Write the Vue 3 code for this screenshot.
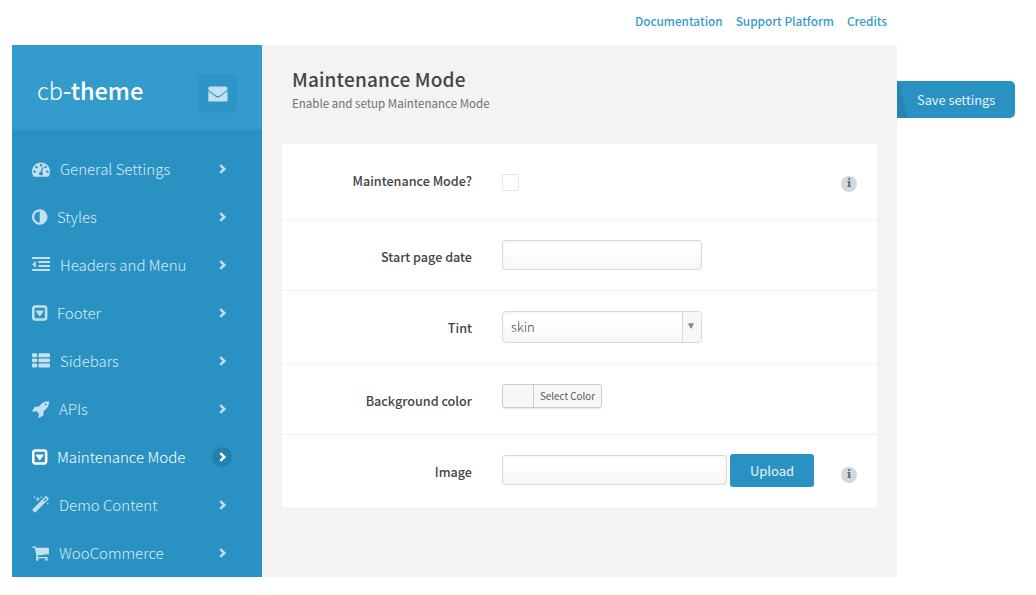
<script setup>
import { ref } from 'vue'

const links = ['Documentation', 'Support Platform', 'Credits']

const bar = (x, y, w, h = 256) => `M${x + 32} ${y}h${w - 64}q32 0 32 32v${h - 64}q0 32-32 32h-${w - 64}q-32 0-32-32v-${h - 64}q0-32 32-32z`
const block = (x, y, w) => `M${x + 96} ${y}h${w - 192}q96 0 96 96v192q0 96-96 96h-${w - 192}q-96 0-96-96v-192q0-96 96-96z`

const icons = {
  gauge: { x: 0, w: 1792, d: 'M384 1152q0-53-37.5-90.5t-90.5-37.5-90.5 37.5-37.5 90.5 37.5 90.5 90.5 37.5 90.5-37.5 37.5-90.5zm192-448q0-53-37.5-90.5t-90.5-37.5-90.5 37.5-37.5 90.5 37.5 90.5 90.5 37.5 90.5-37.5 37.5-90.5zm428 481l101-382q6-26-7.5-48.5t-38.5-29.5-48 6.5-30 39.5l-101 382q-60 5-107 43.5t-63 98.5q-20 77 20 146t117 89 146-20 89-117q16-60-6-117t-72-91zm660-33q0-53-37.5-90.5t-90.5-37.5-90.5 37.5-37.5 90.5 37.5 90.5 90.5 37.5 90.5-37.5 37.5-90.5zm-640-640q0-53-37.5-90.5t-90.5-37.5-90.5 37.5-37.5 90.5 37.5 90.5 90.5 37.5 90.5-37.5 37.5-90.5zm448 192q0-53-37.5-90.5t-90.5-37.5-90.5 37.5-37.5 90.5 37.5 90.5 90.5 37.5 90.5-37.5 37.5-90.5zm320 448q0 261-141 483-19 29-54 29h-1402q-35 0-54-29-141-221-141-483 0-182 71-348t191-286 286-191 348-71 348 71 286 191 191 286 71 348z' },
  contrast: { x: 128, w: 1536, d: 'M896 1440v-1088q-148 0-273 73t-198 198-73 273 73 273 198 198 273 73zm768-544q0 209-103 385.5t-279.5 279.5-385.5 103-385.5-103-279.5-279.5-103-385.5 103-385.5 279.5-279.5 385.5-103 385.5 103 279.5 279.5 103 385.5z' },
  outdent: { x: 0, w: 1792, d: 'M384 544v576q0 13-9.5 22.5t-22.5 9.5q-14 0-23-9l-288-288q-9-9-9-23t9-23l288-288q9-9 23-9 13 0 22.5 9.5t9.5 22.5z' + bar(0, 100, 1792, 200) + bar(640, 500, 1152, 200) + bar(640, 900, 1152, 200) + bar(0, 1300, 1792, 200) },
  caretBox: { x: 128, w: 1536, d: 'M1273 675q17 35-6 67l-320 448q-19 26-51 26t-52-26l-320-448q-23-32-6-67 18-35 58-35h640q40 0 57 35zM1408 1376v-960q0-32-32-32h-960q-32 0-32 32v960q0 32 32 32h960q32 0 32-32zM1664 416v960q0 119-84.5 203.5t-203.5 84.5h-960q-119 0-203.5-84.5t-84.5-203.5v-960q0-119 84.5-203.5t203.5-84.5h960q119 0 203.5 84.5t84.5 203.5z' },
  list: { x: 0, w: 1792, d: block(0, 128, 512) + block(0, 640, 512) + block(0, 1152, 512) + block(640, 128, 1152) + block(640, 640, 1152) + block(640, 1152, 1152) },
  rocket: { x: 0, w: 1664, d: 'M1440 448q0-40-28-68t-68-28-68 28-28 68 28 68 68 28 68-28 28-68zm224-288q0 249-75.5 430.5t-253.5 360.5q-81 80-195 176l-20 379q-2 16-16 26l-384 224q-7 4-16 4-12 0-23-9l-64-64q-13-14-8-32l85-276-281-281-276 85q-3 1-9 1-14 0-23-9l-64-64q-17-19-5-39l224-384q10-14 26-16l379-20q96-114 176-195 188-187 358-258t431-71q14 0 24 9.5t10 22.5z' },
  wand: { x: 64, w: 1664, d: 'M1254 581l293-293-107-107-293 293zm447-293q0 27-18 45l-1286 1286q-18 18-45 18t-45-18l-198-198q-18-18-18-45t18-45l1286-1286q18-18 45-18t45 18l198 198q18 18 18 45zm-1351-190l98 30-98 30-30 98-30-98-98-30 98-30 30-98zm350 162l196 60-196 60-60 196-60-196-196-60 196-60 60-196zm930 478l98 30-98 30-30 98-30-98-98-30 98-30 30-98zm-640-640l98 30-98 30-30 98-30-98-98-30 98-30 30-98z' },
  cart: { x: 64, w: 1664, d: 'M704 1536q0 52-38 90t-90 38-90-38-38-90 38-90 90-38 90 38 38 90zm896 0q0 52-38 90t-90 38-90-38-38-90 38-90 90-38 90 38 38 90zm128-1088v512q0 24-16.5 42.5t-40.5 21.5l-1044 122q13 60 13 70 0 16-24 64h920q26 0 45 19t19 45-19 45-45 19h-1024q-26 0-45-19t-19-45q0-11 8-31.5t16-36 21.5-40 15.5-29.5l-177-823h-204q-26 0-45-19t-19-45 19-45 45-19h256q16 0 28.5 6.5t19.5 15.5 13 24.5 8 26 5.5 29.5 4.5 26h1201q26 0 45 19t19 45z' },
}

const menu = [
  { label: 'General Settings', icon: icons.gauge },
  { label: 'Styles', icon: icons.contrast },
  { label: 'Headers and Menu', icon: icons.outdent },
  { label: 'Footer', icon: icons.caretBox },
  { label: 'Sidebars', icon: icons.list },
  { label: 'APIs', icon: icons.rocket },
  { label: 'Maintenance Mode', icon: icons.caretBox },
  { label: 'Demo Content', icon: icons.wand },
  { label: 'WooCommerce', icon: icons.cart },
]
const active = ref('Maintenance Mode')
const enabled = ref(false)
const startDate = ref('')
const image = ref('')
</script>

<template>
  <div class="page">
    <nav class="top-links">
      <a v-for="l in links" :key="l">{{ l }}</a>
    </nav>
    <div class="shell">
      <aside class="sidebar">
        <header class="brand">
          <div class="logo"><span>cb</span><b>-theme</b></div>
          <button class="mail" aria-label="Messages">
            <svg width="20" height="16" viewBox="0 0 20 16">
              <path fill="#c2e0f0" d="M2 0.500h15.500q2 0 2 2v1.200l-7.400 5.700q-2.200 1.600-4.400 0L0.300 3.700V2.500q0-2 1.700-2zM0.300 5l7.100 5.600q2.500 1.700 5 0L19.500 5v10.500H0.300z" />
            </svg>
          </button>
        </header>
        <ul class="menu">
          <li v-for="m in menu" :key="m.label" :class="{ active: m.label === active }" @click="active = m.label">
            <svg class="icon" :width="Math.round(m.icon.w * 18 / 1792)" height="18" :viewBox="`${m.icon.x} 0 ${m.icon.w} 1792`" preserveAspectRatio="xMinYMid slice">
              <path fill="currentColor" fill-rule="evenodd" :d="m.icon.d" />
            </svg>
            <span class="label">{{ m.label }}</span>
            <span class="arrow">
              <svg width="8" height="10" viewBox="0 0 8 10"><path d="M1.300 1.200L5.400 5L1.300 8.800" fill="none" stroke="currentColor" stroke-width="2.400" /></svg>
            </span>
          </li>
        </ul>
      </aside>
      <main class="content">
        <h1>Maintenance Mode</h1>
        <p class="desc">Enable and setup Maintenance Mode</p>
        <section class="card">
          <div class="row r1">
            <label>Maintenance Mode?</label>
            <button class="check" role="checkbox" :aria-checked="enabled" @click="enabled = !enabled"></button>
            <span class="info">i</span>
          </div>
          <div class="row r2">
            <label>Start page date</label>
            <input v-model="startDate" class="field date">
          </div>
          <div class="row r3">
            <label>Tint</label>
            <div class="select">
              <span>skin</span>
              <i><svg width="6" height="6" viewBox="0 0 6 6"><path d="M0 0.300h6L3.500 5.500h-1z" fill="#888" /></svg></i>
            </div>
          </div>
          <div class="row r4">
            <label>Background color</label>
            <button class="picker"><span>Select Color</span></button>
          </div>
          <div class="row r5">
            <label>Image</label>
            <input v-model="image" class="field image">
            <button class="upload">Upload</button>
            <span class="info">i</span>
          </div>
        </section>
      </main>
      <button class="save">
        <svg width="11" height="37" viewBox="0 0 11 37"><path d="M0 0h1.500L10.500 37H0z" fill="#2585b1" /></svg>
        <span>Save settings</span>
      </button>
    </div>
  </div>
</template>

<style>
body { background: #fff; }
</style>

<style scoped>
.page {
  width: 1036px;
  height: 595px;
  overflow: hidden;
  font-family: "Noto Sans CJK SC", "Noto Sans", sans-serif;
  color: #444;
}
.page * { box-sizing: border-box; }
button, input { font-family: inherit; padding: 0; border: 0; margin: 0; }
.top-links {
  height: 45px;
  width: 887px;
  display: flex;
  justify-content: flex-end;
  gap: 13px;
  line-height: 42px;
  font-size: 11.8px;
  font-weight: 500;
  color: #349ccc;
}
.shell { display: flex; align-items: flex-start; margin-left: 12px; height: 532px; }
.sidebar { width: 250px; height: 532px; background: #2a92c2; overflow: hidden; flex: none; }
.brand {
  height: 85px;
  background: #349ccc;
  display: flex;
  justify-content: space-between;
  padding: 29px 25px 0;
}
.logo { font-size: 23.5px; line-height: 32px; color: #fff; font-weight: 300; }
.logo b { font-weight: 500; }
.mail {
  width: 39px;
  height: 39px;
  border-radius: 5px;
  background: #2d96c6;
  display: flex;
  align-items: center;
  justify-content: center;
}
.menu { list-style: none; margin: 0; padding: 15px 30px 0 20px; }
.menu li { height: 48px; display: flex; align-items: center; color: #c2e0f0; }
.icon { flex: none; margin-right: 10px; overflow: visible; }
.label { flex: 1; font-size: 15px; font-weight: 300; line-height: 24px; color: #d8ebf5; white-space: nowrap; }
.arrow { width: 20px; height: 20px; border-radius: 50%; display: grid; place-items: center; margin-top: -1px; padding-left: 2px; }
.active .arrow { background: #2280ad; }
.menu .active, .active .label { color: #fff; }
.content { width: 635px; height: 532px; background: #f3f3f3; padding: 20px 20px 0; flex: none; }
h1 { margin: 0 0 0 10px; font-size: 19px; line-height: 28px; font-weight: 500; letter-spacing: .15px; color: #444; }
.desc { margin: 0 0 0 10px; font-size: 11.55px; line-height: 20px; height: 51px; color: #707070; }
.card { background: #fff; }
.row { display: flex; align-items: flex-start; border-bottom: 1px solid #f2f2f2; }
.row label {
  width: 190px;
  margin-right: 30px;
  text-align: right;
  font-size: 12.6px;
  line-height: 20px;
  font-weight: 500;
  white-space: nowrap;
}
.r1 { height: 76px; padding-top: 27px; }
.r2 { height: 71px; padding-top: 20px; }
.r3 { height: 73px; padding-top: 20px; }
.r4 { height: 71px; padding-top: 20px; }
.r5 { height: 72px; padding-top: 19px; border-bottom: 0; }
.r2 label, .r3 label, .r4 label { margin-top: 7px; }
.r5 label { margin-top: 8px; }
.check { width: 17px; height: 17px; margin-top: 3px; border: 1px solid #e3e6e8; border-radius: 2px; background: #fff; }
.field {
  height: 30px;
  border: 1px solid #dadada;
  border-radius: 3px;
  background: linear-gradient(#fff 30%, #f7f7f7);
  box-shadow: inset 0 1px 3px rgba(0, 0, 0, .06);
}
.date { width: 200px; }
.image { width: 225px; margin-top: 1px; }
.select {
  width: 200px;
  height: 32px;
  border: 1px solid #dadada;
  border-radius: 4px;
  background: linear-gradient(#fff 30%, #f7f7f7);
  box-shadow: inset 0 1px 3px rgba(0, 0, 0, .06);
  display: flex;
  justify-content: space-between;
  font-size: 13px;
  font-weight: 300;
  line-height: 30px;
  padding-left: 8px;
}
.select i { width: 19px; border-left: 1px solid #dadada; background: #f7f7f7; display: flex; justify-content: center; padding: 11px 2px 0 0; border-radius: 0 3px 3px 0; }
.picker {
  width: 100px;
  height: 24px;
  border: 1px solid #ccc;
  border-radius: 3px;
  background: #f7f7f7;
  box-shadow: 0 1px 0 rgba(0, 0, 0, .08);
  display: flex;
  justify-content: flex-end;
  font-size: 9.8px;
  line-height: 22px;
  color: #555;
}
.picker span { width: 68px; border-left: 1px solid #ccc; }
.upload { width: 84px; height: 33px; margin-left: 3px; border-radius: 3px; background: #2a92c2; color: #e9f4f9; font-size: 13px; line-height: 33px; }
.info {
  width: 16px;
  height: 16px;
  margin: 5px 20px 0 auto;
  border-radius: 50%;
  background: #d0d9de;
  color: #5c6870;
  font: bold 11px/15px "DejaVu Serif", serif;
  text-align: center;
}
.r5 .info { margin-top: 13px; }
.save {
  width: 118px;
  height: 37px;
  margin-top: 36px;
  border-radius: 0 5px 5px 0;
  background: #2a92c2;
  color: #e9f4f9;
  font-size: 12.8px;
  display: flex;
  align-items: center;
}
.save svg { margin-right: 9px; }
.save span { line-height: 37px; }
</style>
